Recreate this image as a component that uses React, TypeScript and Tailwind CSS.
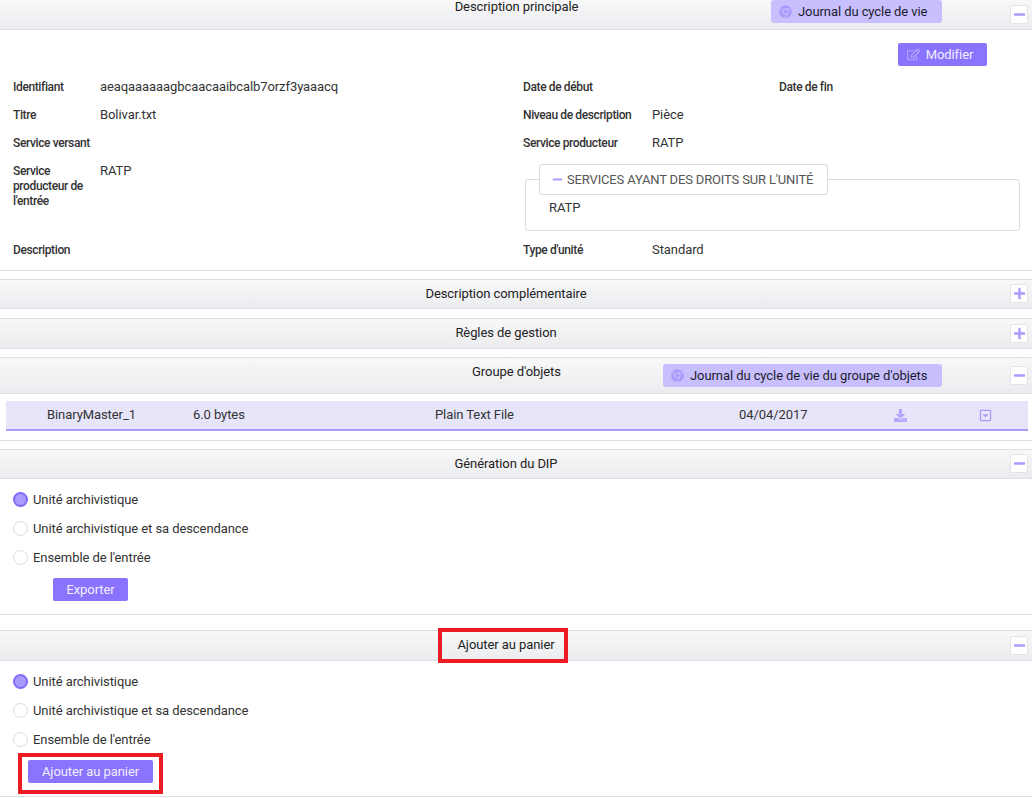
import { FaChrome, FaDownload, FaMinus, FaPlus, FaRegCaretSquareDown, FaRegEdit } from "react-icons/fa";
import type { ReactNode } from "react";

function Toggle({ open }: { open: boolean }) {
  return (
    <span className="absolute right-[4px] top-[calc(50%-10px)] flex h-[19px] w-[18px] items-center justify-center rounded-[2px] border border-[#e4e4e4] bg-white text-[#a99bfb]">
      {open ? <FaMinus size={13} /> : <FaPlus size={13} />}
    </span>
  );
}

function PanelHeader({
  title,
  open = true,
  height,
  titleClass = "pr-[20px]",
  children,
}: {
  title: string;
  open?: boolean;
  height: string;
  titleClass?: string;
  children?: ReactNode;
}) {
  return (
    <div
      className={`relative flex w-full items-center justify-center border-y border-[#dedfe2] bg-gradient-to-b from-[#f8f8f9] to-[#ebecef] text-[13px] tracking-[-0.08px] text-[#222] ${height}`}
    >
      <span className={titleClass}>{title}</span>
      {children}
      <Toggle open={open} />
    </div>
  );
}

function JournalButton({ label, className }: { label: string; className: string }) {
  return (
    <span
      className={`absolute flex h-[23px] items-center rounded-[3px] bg-[#c8c0fe] pl-[8px] text-[13px] tracking-[-0.08px] text-[#1c1b2e] ${className}`}
    >
      <FaChrome size={13} className="mr-[6px] text-[#a99bfb]" />
      {label}
    </span>
  );
}

function Label({ children, className = "" }: { children: ReactNode; className?: string }) {
  return (
    <div className={`shrink-0 text-[12px] font-medium leading-[15px] tracking-[-0.38px] text-[#333] ${className}`}>
      {children}
    </div>
  );
}

function Value({ children }: { children: ReactNode }) {
  return <div className="-mt-px text-[13px] leading-[15px] tracking-[-0.08px] text-[#333]">{children}</div>;
}

function Field({ label, value, labelWidth = "w-[87px]" }: { label: string; value?: string; labelWidth?: string }) {
  return (
    <div className="flex items-start">
      <Label className={labelWidth}>{label}</Label>
      {value && <Value>{value}</Value>}
    </div>
  );
}

function Radio({ label, checked = false }: { label: string; checked?: boolean }) {
  return (
    <div className="flex h-[15px] items-center">
      <span
        className={`mr-[5px] h-[15px] w-[15px] rounded-full ${checked ? "border-2 border-[#7f6cf9] bg-[#a99bfb]" : "border border-[#dcdcdc] bg-white"}`}
      />
      <span className="text-[13px] tracking-[-0.08px] text-[#333]">{label}</span>
    </div>
  );
}

function RadioGroup() {
  return (
    <div className="flex flex-col gap-[14px]">
      <Radio label="Unité archivistique" checked />
      <Radio label="Unité archivistique et sa descendance" />
      <Radio label="Ensemble de l'entrée" />
    </div>
  );
}

function PurpleButton({ children, className = "" }: { children: ReactNode; className?: string }) {
  return (
    <span
      className={`flex h-[23px] items-center justify-center rounded-[2px] bg-[#8a73ff] text-[13px] tracking-[-0.08px] text-[#f1efff] ${className}`}
    >
      {children}
    </span>
  );
}

export default function App() {
  return (
    <div className="h-[798px] w-[1034px] overflow-hidden bg-white font-['Roboto',sans-serif]">
      <div className="w-[1032px]">
        {/* Description principale */}
        <div className="-mt-px">
          <PanelHeader title="Description principale" height="h-[31px]" titleClass="-mt-[15px] ml-px">
            <JournalButton label="Journal du cycle de vie" className="left-[771px] top-0 w-[171px]" />
          </PanelHeader>
        </div>

        <div className="h-[241px] border-b border-[#e0e0e0]">
          <div className="flex justify-end pr-[45px] pt-[13px]">
            <PurpleButton className="w-[89px] pr-[5px]">
              <FaRegEdit size={13} className="mr-[6px] text-[#b5a8fc]" />
              Modifier
            </PurpleButton>
          </div>

          <div className="mt-[14px] grid grid-cols-[510px_1fr] pl-[13px]">
            <div className="flex flex-col gap-[13px]">
              <Field label="Identifiant" value="aeaqaaaaaagbcaacaaibcalb7orzf3yaaacq" />
              <Field label="Titre" value="Bolivar.txt" />
              <Field label="Service versant" />
              <div className="flex items-start">
                <Label className="w-[87px] pr-[8px]">Service producteur de l'entrée</Label>
                <Value>RATP</Value>
              </div>
              <div className="mt-[21px]">
                <Field label="Description" />
              </div>
            </div>

            <div className="flex flex-col">
              <div className="flex">
                <Label className="w-[256px]">Date de début</Label>
                <Label>Date de fin</Label>
              </div>
              <div className="mt-[13px]">
                <Field label="Niveau de description" value="Pièce" labelWidth="w-[129px]" />
              </div>
              <div className="mt-[13px]">
                <Field label="Service producteur" value="RATP" labelWidth="w-[129px]" />
              </div>
              <div className="ml-[2px] mt-[28px] h-[52px] w-[495px] rounded-[3px] border border-[#dcdcdc]">
                <div className="-mt-[16px] ml-[13px] flex h-[31px] w-[289px] items-center rounded-[3px] border border-[#dcdcdc] bg-white pl-[12px] text-[13px] tracking-[-0.16px] text-[#555]">
                  <FaMinus size={11} className="mr-[4px] text-[#a99bfb]" />
                  SERVICES AYANT DES DROITS SUR L'UNITÉ
                </div>
                <div className="ml-[23px] mt-[6px]">
                  <Value>RATP</Value>
                </div>
              </div>
              <div className="mt-[12px]">
                <Field label="Type d'unité" value="Standard" labelWidth="w-[129px]" />
              </div>
            </div>
          </div>
        </div>

        <div className="mt-[8px]">
          <PanelHeader title="Description complémentaire" open={false} height="h-[30px]" />
        </div>
        <div className="mt-[9px]">
          <PanelHeader title="Règles de gestion" open={false} height="h-[31px]" titleClass="pr-[20px] pb-[2px]" />
        </div>

        {/* Groupe d'objets */}
        <div className="mt-[8px]">
          <PanelHeader title="Groupe d'objets" height="h-[37px]" titleClass="-mt-[8px] ml-px">
            <JournalButton label="Journal du cycle de vie du groupe d'objets" className="left-[663px] top-[6px] w-[279px]" />
          </PanelHeader>
        </div>

        <div className="ml-[6px] mr-[4px] mt-[7px] flex h-[30px] items-center border-b-2 border-[#a99bfb] bg-[#e6e5fa] text-[13px] tracking-[-0.08px] text-[#333]">
          <span className="ml-[41px] w-[146px]">BinaryMaster_1</span>
          <span className="w-[242px]">6.0 bytes</span>
          <span className="w-[304px]">Plain Text File</span>
          <span className="w-[155px]">04/04/2017</span>
          <FaDownload size={13} className="text-[#b3a8fb]" />
          <FaRegCaretSquareDown size={13} className="ml-[72px] text-[#a99bfb]" />
        </div>
        <div className="mt-[9px] border-b border-[#e0e0e0]" />

        {/* Génération du DIP */}
        <div className="mt-[8px]">
          <PanelHeader title="Génération du DIP" height="h-[30px]" />
        </div>
        <div className="h-[136px] border-b border-[#e0e0e0] pl-[13px] pt-[13px]">
          <RadioGroup />
          <PurpleButton className="ml-[40px] mt-[13px] w-[75px]">Exporter</PurpleButton>
        </div>

        {/* Ajouter au panier */}
        <div className="relative mt-[15px]">
          <PanelHeader title="Ajouter au panier" height="h-[31px]" titleClass="pr-[20px] pb-px" />
          <span className="absolute left-[438px] top-[-2px] h-[35px] w-[130px] border-[4px] border-[#ed1c24]" />
        </div>
        <div className="relative h-[136px] border-b border-[#e0e0e0] pl-[13px] pt-[13px]">
          <RadioGroup />
          <PurpleButton className="ml-[15px] mt-[13px] w-[125px]">Ajouter au panier</PurpleButton>
          <span className="absolute left-[18px] top-[92px] h-[41px] w-[145px] border-[4px] border-[#ed1c24]" />
        </div>
      </div>
    </div>
  );
}
